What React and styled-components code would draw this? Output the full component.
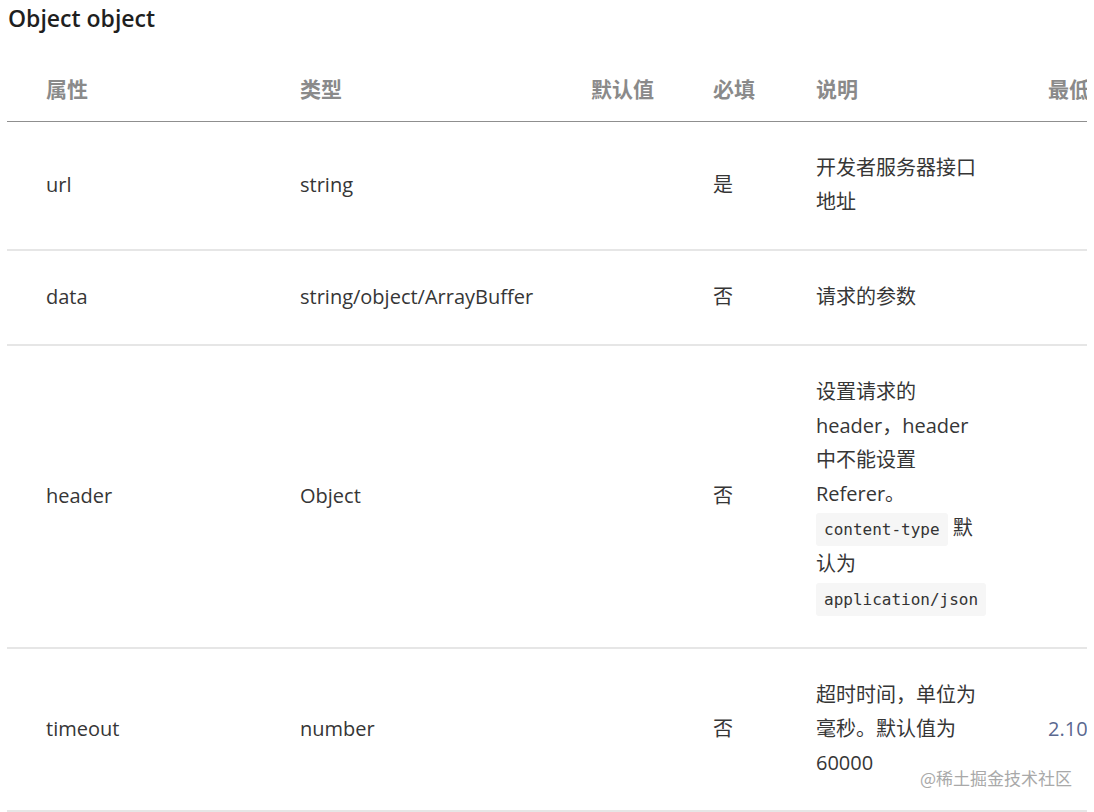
import React from "react"
import styled, { createGlobalStyle } from "styled-components"

const GlobalStyle = createGlobalStyle`
    body {
        margin:0;
        background:#fff;
        font-family:"Open Sans","Noto Sans CJK SC",sans-serif;
    }
`;

function getRows(){
    return [
        { name: "url", type: "string", required: "是", desc: <>开发者服务器接口地址</> },
        { name: "data", type: "string/object/ArrayBuffer", required: "否", desc: <>请求的参数</> },
        {
            name: "header",
            type: "Object",
            required: "否",
            desc: (
                <>
                    设置请求的 header，header 中不能设置 Referer。<Code>content-type</Code> 默认为 <Code>application/json</Code>
                </>
            ),
        },
        { name: "timeout", type: "number", required: "否", desc: <>超时时间，单位为毫秒。默认值为 60000</>, version: "2.10" },
    ]
}

export default function App(){
    const rows = getRows()
    return(
        <>
            <GlobalStyle />
            <Page>
                <Title>Object object</Title>
                <Table>
                    <HeadRow>
                        <HeadCell>属性</HeadCell>
                        <HeadCell>类型</HeadCell>
                        <HeadCell>默认值</HeadCell>
                        <HeadCell>必填</HeadCell>
                        <HeadCell>说明</HeadCell>
                        <HeadCell>最低版本</HeadCell>
                    </HeadRow>
                    {rows.map((r) => (
                        <Row key={r.name}>
                            <Cell>{r.name}</Cell>
                            <Cell>{r.type}</Cell>
                            <Cell></Cell>
                            <Cell>{r.required}</Cell>
                            <Desc>{r.desc}</Desc>
                            <Version>{r.version}</Version>
                        </Row>
                    ))}
                </Table>
                <Watermark>@稀土掘金技术社区</Watermark>
            </Page>
        </>
    )
}

export const Page = styled.div`
    position:relative;
    width:1094px;
    height:812px;
    overflow:hidden;
`;

export const Title = styled.div`
    font-family:"Open Sans","Noto Sans CJK SC",sans-serif;
    font-weight:600;
    font-size:23px;
    color:#1f1f1f;
    padding:2px 0 0 8px;
    height:50px;
    box-sizing:border-box;
`;

export const Table = styled.div`
    margin-left:7px;
    width:1080px;
    overflow:hidden;
`;

const cols = "254px 291px 122px 103px 232px 180px";

export const HeadRow = styled.div`
    display:grid;
    grid-template-columns:${cols};
    border-bottom:1px solid #8f8f8f;
`;

export const HeadCell = styled.div`
    padding:22px 10px 15px 39px;
    font-size:21px;
    line-height:34px;
    font-weight:700;
    color:#8a8a8a;
    white-space:nowrap;
`;

export const Row = styled.div`
    display:grid;
    grid-template-columns:${cols};
    border-bottom:2px solid #e6e6e6;
`;

export const Cell = styled.div`
    display:flex;
    align-items:center;
    padding:29px 10px 30px 39px;
    font-size:20px;
    line-height:34px;
    color:#363636;
`;

export const Desc = styled.div`
    align-self:center;
    padding:29px 20px 30px 39px;
    font-size:20px;
    line-height:34px;
    color:#363636;
    overflow-wrap:normal;
`;

export const Version = styled(Cell)`
    color:#5a6890;
`;

export const Code = styled.code`
    font-family:"DejaVu Sans Mono","Liberation Mono",monospace;
    font-size:16px;
    background:#f6f6f6;
    padding:7px 8px;
    border-radius:3px;
    color:#333;
    white-space:nowrap;
`;

export const Watermark = styled.div`
    position:absolute;
    right:22px;
    bottom:22px;
    font-size:17px;
    color:#a9a9a9;
    font-family:"Noto Sans CJK SC",sans-serif;
`;
